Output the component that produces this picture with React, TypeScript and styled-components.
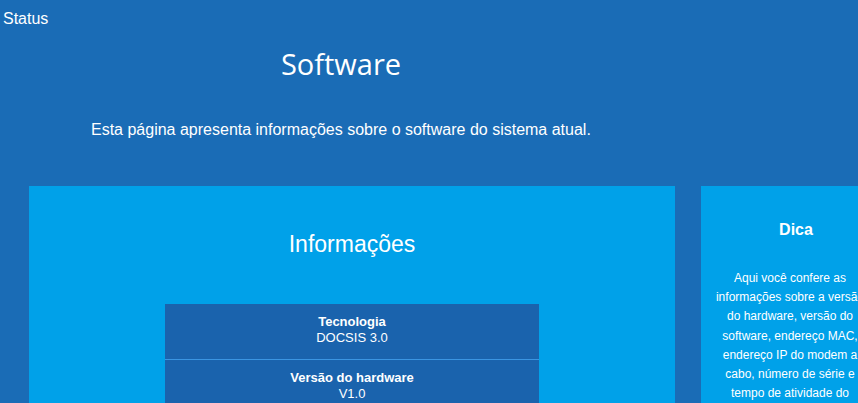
import React from 'react'
import styled, { createGlobalStyle } from 'styled-components'

const GlobalStyle = createGlobalStyle`
  html, body {
    margin: 0;
    padding: 0;
    background: #1a6cb6;
    overflow: hidden;
  }
  body {
    font-family: "Liberation Sans", Arial, sans-serif;
    color: #ffffff;
  }
`

const Page = styled.div`
  width: 920px;
  min-height: 403px;
`

const Crumb = styled.div`
  padding: 10px 0 0 3px;
  font-size: 16px;
  line-height: 18px;
`

const Title = styled.h1`
  width: 682px;
  margin: 18px 0 0 0;
  text-align: center;
  font-family: "Open Sans", "Noto Sans", sans-serif;
  font-weight: 400;
  font-size: 29px;
  line-height: 36px;
`

const Intro = styled.p`
  margin: 38px 0 0 91px;
  font-size: 16px;
  line-height: 20px;
`

const Columns = styled.div`
  display: flex;
  align-items: flex-start;
  gap: 26px;
  margin-top: 46px;
  padding-left: 29px;
`

const Panel = styled.section<{ $width: number }>`
  width: ${p => p.$width}px;
  min-height: 240px;
  background: #00a1e9;
  box-sizing: border-box;
`

const MainPanel = styled(Panel)`
  padding-top: 44px;
  text-align: center;
`

const PanelTitle = styled.h2`
  margin: 0;
  font-weight: 400;
  font-size: 23px;
  line-height: 28px;
`

const InfoTable = styled.div`
  width: 374px;
  margin: 46px auto 0;
  background: #1a63ad;
`

const InfoRow = styled.div`
  padding: 10px 8px 13px;
  border-bottom: 1px solid #3b95e2;
  font-size: 13px;
  line-height: 16px;
  text-align: center;
`

const Label = styled.div`
  font-weight: 700;
`

const TipPanel = styled(Panel)`
  padding: 34px 11px 0;
  text-align: center;
`

const TipTitle = styled.h3`
  margin: 0;
  padding-left: 12px;
  font-size: 16px;
  line-height: 20px;
  font-weight: 700;
`

const TipText = styled.p`
  margin: 29px 0 0;
  font-size: 12px;
  line-height: 19.2px;
`

const rows = [
  { label: 'Tecnologia', value: 'DOCSIS 3.0' },
  { label: 'Versão do hardware', value: 'V1.0' },
  { label: 'Versão do software', value: 'V1.0.3' },
]

export default function App() {
  return (
    <>
      <GlobalStyle />
      <Page>
        <Crumb>Status</Crumb>
        <Title>Software</Title>
        <Intro>Esta página apresenta informações sobre o software do sistema atual.</Intro>
        <Columns>
          <MainPanel $width={646}>
            <PanelTitle>Informações</PanelTitle>
            <InfoTable>
              {rows.map(r => (
                <InfoRow key={r.label}>
                  <Label>{r.label}</Label>
                  <div>{r.value}</div>
                </InfoRow>
              ))}
            </InfoTable>
          </MainPanel>
          <TipPanel $width={178}>
            <TipTitle>Dica</TipTitle>
            <TipText>
              Aqui você confere as informações sobre a versão do hardware, versão do software,
              endereço MAC, endereço IP do modem a cabo, número de série e tempo de atividade do
              sistema.
            </TipText>
          </TipPanel>
        </Columns>
      </Page>
    </>
  )
}
